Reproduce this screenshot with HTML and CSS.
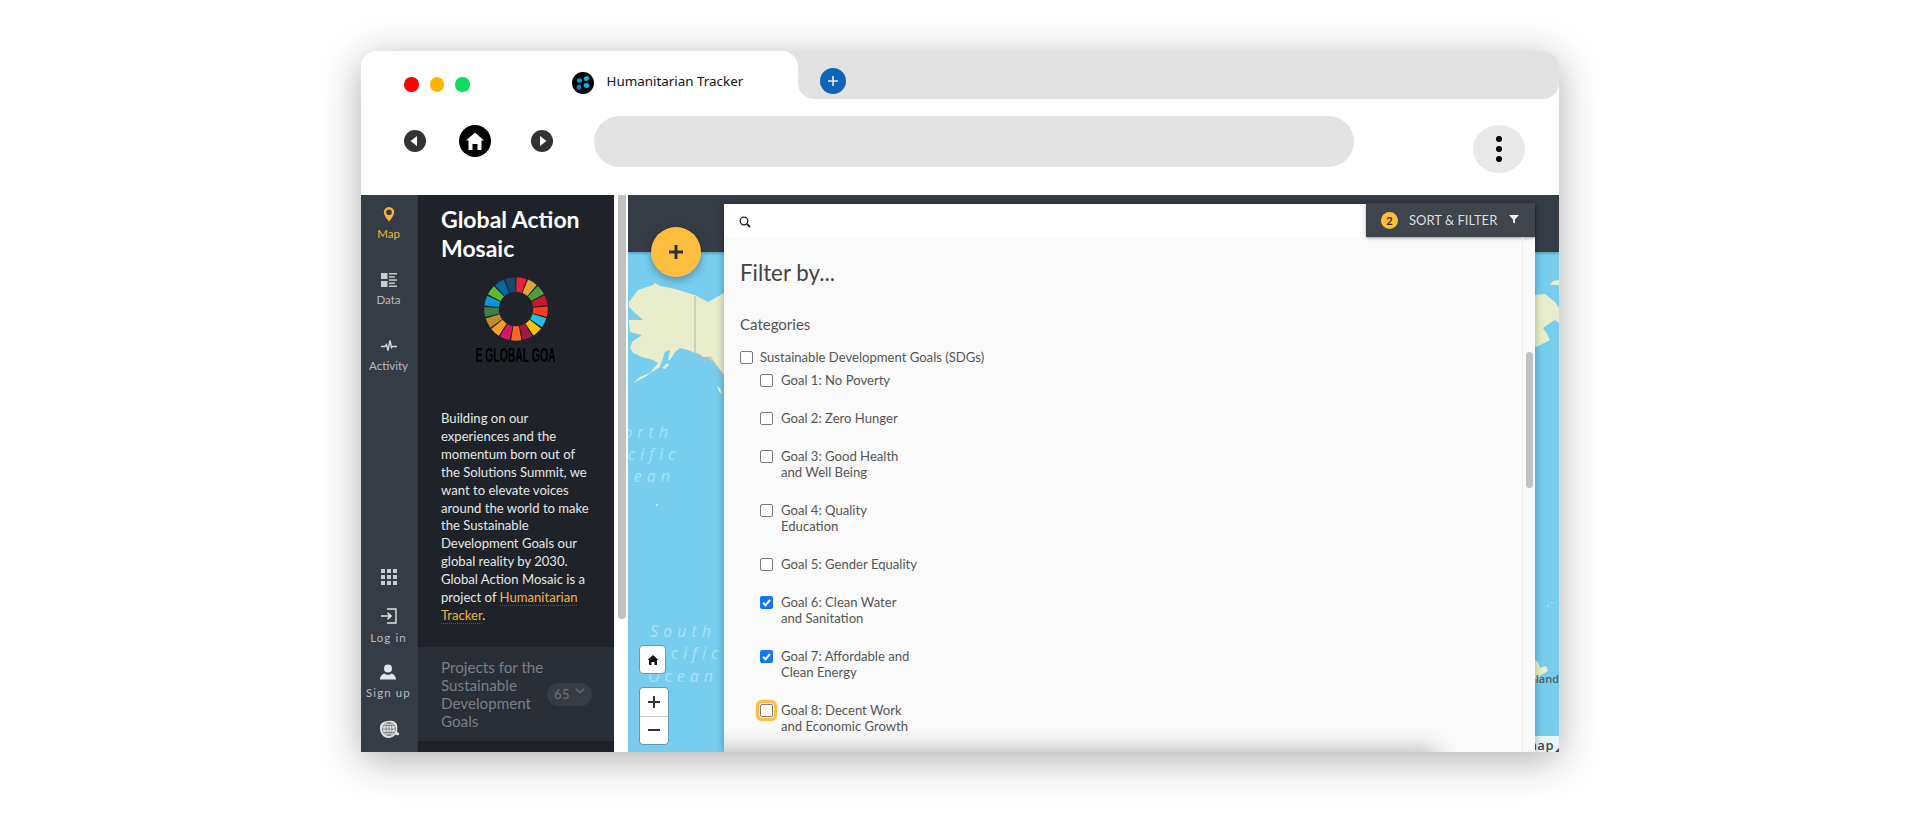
FILE: index.html
```html
<!DOCTYPE html>
<html lang="en">
<head>
  <meta charset="UTF-8">
  <meta name="viewport" content="width=device-width, initial-scale=1.0">
  <title>Humanitarian Tracker</title>
  <link rel="stylesheet" href="styles.css">
</head>
<body>

<div class="window">

  <!-- Browser chrome -->
  <div class="tabs">
    <div class="tab-wrap">
      <div class="tab">
        <div class="lights">
          <span class="light red"></span>
          <span class="light amber"></span>
          <span class="light green"></span>
        </div>
        <svg class="favicon" viewBox="0 0 22 22">
          <circle cx="11" cy="11" r="11" fill="#000"/>
          <ellipse cx="7.5" cy="8.5" rx="2.6" ry="2.3" fill="#0d9bd8"/>
          <ellipse cx="14.5" cy="6.5" rx="2.8" ry="2.2" fill="#12b0ea" transform="rotate(-30 14.5 6.5)"/>
          <ellipse cx="7" cy="15" rx="2.3" ry="2.6" fill="#0b7fc0"/>
          <ellipse cx="14.5" cy="13.5" rx="2.9" ry="2.4" fill="#12b0ea"/>
        </svg>
        <span class="tab-title">Humanitarian Tracker</span>
      </div>
    </div>
    <div class="tab-rest">
      <button class="new-tab">
        <svg viewBox="0 0 12 12" width="12" height="12"><path d="M6 1v10M1 6h10" stroke="#e8eef6" stroke-width="1.6"/></svg>
      </button>
    </div>
  </div>

  <div class="toolbar">
    <svg class="nav-btn back" viewBox="0 0 22 22">
      <circle cx="11" cy="11" r="11" fill="#333"/>
      <path d="M6.500 11l6.500-5v10z" fill="#fff"/>
    </svg>
    <svg class="home-btn" viewBox="0 0 32 32">
      <circle cx="16" cy="16" r="16" fill="#000"/>
      <path d="M16 7.500L25 15.500h-2.500V25h-4v-6h-5v6h-4V15.500H7z" fill="#fff"/>
    </svg>
    <svg class="nav-btn forward" viewBox="0 0 22 22">
      <circle cx="11" cy="11" r="11" fill="#333"/>
      <path d="M15.500 11l-6.500-5v10z" fill="#fff"/>
    </svg>
    <div class="address"></div>
    <div class="menu-btn"><span></span><span></span><span></span></div>
  </div>

  <div class="app">

    <!-- Icon rail -->
    <nav class="rail">
      <a class="rail-item active">
        <svg viewBox="0 0 16 16" width="16" height="16"><path d="M8 1a5.200 5.200 0 0 0-5.200 5.200C2.800 9.500 8 15.500 8 15.500s5.200-6 5.200-9.300A5.200 5.200 0 0 0 8 1zm0 8a2.800 2.800 0 1 1 0-5.600 2.800 2.800 0 0 1 0 5.600z" fill="#f1b43d"/></svg>
        <span>Map</span>
      </a>
      <a class="rail-item">
        <svg viewBox="0 0 16 16" width="16" height="16" fill="#c9cbce"><rect x="0" y="1" width="6.500" height="6"/><rect x="0" y="9" width="6.500" height="6"/><rect x="8" y="1" width="8" height="1.500"/><rect x="8" y="4.200" width="6" height="1.500"/><rect x="8" y="7.300" width="8" height="1.500"/><rect x="8" y="10.500" width="6" height="1.500"/><rect x="8" y="13.500" width="8" height="1.500"/></svg>
        <span>Data</span>
      </a>
      <a class="rail-item">
        <svg viewBox="0 0 16 16" width="16" height="16"><path d="M0 8.500h4l1.500-2 1.500 6 2-10 1.500 7 1-1h4.500" fill="none" stroke="#d5d7da" stroke-width="1.400"/></svg>
        <span>Activity</span>
      </a>

      <div class="rail-bottom">
        <svg class="rail-grid" viewBox="0 0 16 16" width="16" height="16" fill="#c9cbce"><rect x="0" y="0" width="4" height="4"/><rect x="6" y="0" width="4" height="4"/><rect x="12" y="0" width="4" height="4"/><rect x="0" y="6" width="4" height="4"/><rect x="6" y="6" width="4" height="4"/><rect x="12" y="6" width="4" height="4"/><rect x="0" y="12" width="4" height="4"/><rect x="6" y="12" width="4" height="4"/><rect x="12" y="12" width="4" height="4"/></svg>
        <a class="rail-item small login">
          <svg viewBox="0 0 16 16" width="16" height="16"><path d="M0 8h9M6.500 4.800L10 8l-3.500 3.200" fill="none" stroke="#e3e4e6" stroke-width="1.600"/><path d="M6 1h9v14H6" fill="none" stroke="#e3e4e6" stroke-width="1.400"/></svg>
          <span>Log in</span>
        </a>
        <a class="rail-item small signup">
          <svg viewBox="0 0 16 16" width="16" height="16" fill="#e3e4e6"><circle cx="8" cy="4.500" r="4"/><path d="M0 15.500c0-3.500 2.500-5.500 4.500-6 1 1 2 1.300 3.500 1.300s2.500-.3 3.500-1.300c2 .5 4.500 2.500 4.500 6z"/></svg>
          <span>Sign up</span>
        </a>
        <svg class="rail-globe" viewBox="0 0 22 20" width="22" height="20">
          <path d="M3 4c3-3.500 11-4 14-2 3 2 2.500 7 2 10 2 .5 3 2 1.500 3-1 .6-2.200.3-3-.5-2.500 3.500-8 4.500-11 2.500C2.500 14.500.500 8 3 4z" fill="#e0e1e3"/>
          <g fill="none" stroke="#6d7076" stroke-width=".7"><circle cx="11" cy="9" r="6.500"/><ellipse cx="11" cy="9" rx="3" ry="6.500"/><path d="M4.500 9h13M5.500 5.500h11M5.500 12.500h11M11 2.500v13"/></g>
        </svg>
      </div>
    </nav>

    <!-- Project panel -->
    <aside class="panel">
      <div class="panel-intro">
        <h1>Global Action Mosaic</h1>
        <svg class="wheel" viewBox="0 0 64 64">
          <g fill="none" stroke-width="14.500" stroke-dasharray="7.900 146">
            <circle cx="32" cy="32" r="24.500" stroke="#e5243b" transform="rotate(-89 32 32)"/>
            <circle cx="32" cy="32" r="24.500" stroke="#dda63a" transform="rotate(-67.800 32 32)"/>
            <circle cx="32" cy="32" r="24.500" stroke="#4c9f38" transform="rotate(-46.600 32 32)"/>
            <circle cx="32" cy="32" r="24.500" stroke="#c5192d" transform="rotate(-25.500 32 32)"/>
            <circle cx="32" cy="32" r="24.500" stroke="#ff3a21" transform="rotate(-4.300 32 32)"/>
            <circle cx="32" cy="32" r="24.500" stroke="#26bde2" transform="rotate(16.900 32 32)"/>
            <circle cx="32" cy="32" r="24.500" stroke="#fcc30b" transform="rotate(38.100 32 32)"/>
            <circle cx="32" cy="32" r="24.500" stroke="#a21942" transform="rotate(59.300 32 32)"/>
            <circle cx="32" cy="32" r="24.500" stroke="#fd6925" transform="rotate(80.400 32 32)"/>
            <circle cx="32" cy="32" r="24.500" stroke="#dd1367" transform="rotate(101.600 32 32)"/>
            <circle cx="32" cy="32" r="24.500" stroke="#fd9d24" transform="rotate(122.800 32 32)"/>
            <circle cx="32" cy="32" r="24.500" stroke="#bf8b2e" transform="rotate(144 32 32)"/>
            <circle cx="32" cy="32" r="24.500" stroke="#3f7e44" transform="rotate(165.200 32 32)"/>
            <circle cx="32" cy="32" r="24.500" stroke="#0a97d9" transform="rotate(186.300 32 32)"/>
            <circle cx="32" cy="32" r="24.500" stroke="#56c02b" transform="rotate(207.500 32 32)"/>
            <circle cx="32" cy="32" r="24.500" stroke="#00689d" transform="rotate(228.700 32 32)"/>
            <circle cx="32" cy="32" r="24.500" stroke="#19486a" transform="rotate(249.900 32 32)"/>
          </g>
        </svg>
        <div class="wheel-caption"><span>THE GLOBAL GOALS</span></div>
        <p>Building on our experiences and the momentum born out of the Solutions Summit, we want to elevate voices around the world to make the Sustainable Development Goals our global reality by 2030. Global Action Mosaic is a project of <a href="#">Humanitarian Tracker</a>.</p>
      </div>
      <div class="projects">
        <span class="projects-title">Projects for the Sustainable Development Goals</span>
        <span class="projects-count">65
          <svg viewBox="0 0 10 6" width="10" height="6"><path d="M1 1l4 3.500L9 1" fill="none" stroke="#5d626a" stroke-width="1.800"/></svg>
        </span>
      </div>
    </aside>

    <div class="panel-scroll"><div class="panel-thumb"></div></div>

    <!-- Map with filter overlay -->
    <main class="map">
      <svg class="map-canvas" viewBox="628 195 931 557">
        <path class="land" d="M629 302L638 290 653 285 655 283 660 286 675 289 695 295 708 302 717 297 724 293V375L720 370 713 362 708 357 703 357 697 354 688 350 680 348 675 352 670 360 668 360 670 350 665 352 660 367 655 370 645 377 633 383 640 377 650 373 658 363 653 360 642 357 633 353 630 348 632 342 642 335 630 332 629 320 643 320 635 313 629 307Z"/>
        <path class="land" d="M662 368l5-5 2 2-4 4zM717 386l3 2 2 6-3-2z"/>
        <path class="border" d="M695 296V353L700 355 705 362 710 357 718 368 724 377"/>
        <path class="land" d="M1535 295L1545 294 1555 302 1559 308V323L1555 320 1550 323 1543 328 1547 334 1550 340 1536 347 1535 347Z"/>
        <path class="land" d="M1550 285L1553 281 1559 280V285Z"/>
        <path class="land" d="M1535 660L1538 662 1540 668 1546 666 1548 671 1541 675 1537 679 1535 679Z"/>
        <circle class="land" cx="657" cy="505" r="1"/>
        <circle class="land" cx="1548" cy="606" r=".8"/>
        <circle class="land" cx="1552" cy="603" r=".8"/>
        <text class="ocean" x="640" y="438" text-anchor="middle">North</text>
        <text class="ocean" x="640" y="460" text-anchor="middle">Pacific</text>
        <text class="ocean" x="640" y="482" text-anchor="middle">Ocean</text>
        <text class="ocean" x="683" y="637" text-anchor="middle">South</text>
        <text class="ocean" x="683" y="659" text-anchor="middle">Pacific</text>
        <text class="ocean" x="683" y="682" text-anchor="middle">Ocean</text>
        <text class="place" x="1559" y="683" text-anchor="end">New Zealand</text>
      </svg>

      <div class="map-top"></div>
      <button class="fab">
        <svg viewBox="0 0 16 16" width="16" height="16"><path d="M8 1v14M1 8h14" stroke="#2d3138" stroke-width="3"/></svg>
      </button>

      <button class="map-home">
        <svg viewBox="0 0 12 12" width="12" height="12"><path d="M6 1l5.500 5H10v5H7.500V8h-3v3H2V6H.5z" fill="#111"/></svg>
      </button>
      <div class="map-zoom">
        <button><svg viewBox="0 0 12 12" width="12" height="12"><path d="M6 0v12M0 6h12" stroke="#333" stroke-width="2"/></svg></button>
        <button><svg viewBox="0 0 12 12" width="12" height="12"><path d="M0 6h12" stroke="#333" stroke-width="2"/></svg></button>
      </div>

      <div class="attribution"><span>map</span><i></i></div>

      <section class="filter">
        <div class="filter-head">
          <div class="search">
            <svg viewBox="0 0 12 12" width="12" height="12"><circle cx="5" cy="5" r="3.800" fill="none" stroke="#222" stroke-width="1.300"/><path d="M8 8l3 3" stroke="#222" stroke-width="1.800"/></svg>
          </div>
          <button class="sort">
            <span class="sort-count">2</span>
            <span>SORT &amp; FILTER</span>
            <svg viewBox="0 0 10 10" width="10" height="10"><path d="M0 1h10L6 5.500V9.500L4 8.500V5.500z" fill="#f0f0f0"/></svg>
          </button>
        </div>

        <div class="filter-body">
          <div class="filter-main">
            <h2>Filter by...</h2>
            <h3>Categories</h3>
            <label class="opt top"><span class="check"></span><span>Sustainable Development Goals (SDGs)</span></label>
            <div class="goals">
              <label class="opt"><span class="check"></span><span class="opt-text">Goal 1: No Poverty</span></label>
              <label class="opt"><span class="check"></span><span class="opt-text">Goal 2: Zero Hunger</span></label>
              <label class="opt"><span class="check"></span><span class="opt-text">Goal 3: Good Health and Well Being</span></label>
              <label class="opt"><span class="check"></span><span class="opt-text">Goal 4: Quality Education</span></label>
              <label class="opt"><span class="check"></span><span class="opt-text">Goal 5: Gender Equality</span></label>
              <label class="opt">
                <span class="check on"><svg viewBox="0 0 13 13" width="13" height="13"><path d="M3 6.800l2.500 2.500L10 4" fill="none" stroke="#fff" stroke-width="2"/></svg></span>
                <span class="opt-text">Goal 6: Clean Water and Sanitation</span>
              </label>
              <label class="opt">
                <span class="check on"><svg viewBox="0 0 13 13" width="13" height="13"><path d="M3 6.800l2.500 2.500L10 4" fill="none" stroke="#fff" stroke-width="2"/></svg></span>
                <span class="opt-text">Goal 7: Affordable and Clean Energy</span>
              </label>
              <label class="opt"><span class="check focus"></span><span class="opt-text">Goal 8: Decent Work and Economic Growth</span></label>
            </div>
          </div>
          <div class="filter-scroll"><div class="filter-thumb"></div></div>
          <div class="filter-fade"></div>
        </div>
      </section>
    </main>

  </div>
</div>

</body>
</html>
```

FILE: styles.css
```css
* { box-sizing: border-box; }
html, body { height: 100%; }
body {
  margin: 0;
  padding-top: 51px;
  background: #fff;
  font-family: 'Lato', sans-serif;
}
button {
  border: none;
  padding: 0;
  font-family: inherit;
  cursor: pointer;
}
.window {
  position: relative;
  width: 1198px;
  height: 701px;
  margin: 0 auto;
  background: #fff;
  border-radius: 16px 16px 0 0;
  box-shadow: 0 8px 40px rgba(0,0,0,0.32);
}

/* chrome */
.tabs {
  display: flex;
  height: 48px;
}
.tab-wrap {
  width: 437px;
  background: #e2e2e2;
  border-top-left-radius: 16px;
}
.tab {
  display: flex;
  align-items: center;
  height: 100%;
  padding-left: 43px;
  background: #fff;
  border-radius: 16px 16px 0 0;
}
.lights {
  display: flex;
  gap: 11px;
  margin-top: 19px;
}
.light {
  width: 14.5px;
  height: 14.5px;
  border-radius: 50%;
}
.light.red { background: #ff0000; }
.light.amber { background: #ffb400; }
.light.green { background: #0ddb5c; }
.favicon {
  width: 22px;
  height: 22px;
  margin: 15px 0 0 102px;
}
.tab-title {
  margin: 11px 0 0 13px;
  font-family: 'Noto Sans', sans-serif;
  font-size: 13.4px;
  color: #111;
}
.tab-rest {
  flex: 1;
  display: flex;
  align-items: center;
  padding-left: 22px;
  background: #e2e2e2;
  border-radius: 0 16px 16px 16px;
}
.new-tab {
  display: flex;
  align-items: center;
  justify-content: center;
  width: 26px;
  height: 26px;
  margin-top: 11px;
  border-radius: 50%;
  background: #0f63b8;
}
.toolbar {
  display: flex;
  align-items: center;
  height: 96px;
  padding: 0 34px 12px 43px;
}
.nav-btn {
  width: 22px;
  height: 22px;
}
.home-btn {
  width: 32px;
  height: 32px;
  margin-left: 33px;
}
.forward { margin-left: 40px; }
.address {
  width: 760px;
  height: 51px;
  margin-left: 41px;
  background: #e3e3e3;
  border-radius: 26px;
}
.menu-btn {
  display: flex;
  flex-direction: column;
  align-items: center;
  justify-content: center;
  gap: 3.5px;
  width: 52px;
  height: 48px;
  margin: 16px 0 0 auto;
  background: #e9e9e9;
  border-radius: 50%;
}
.menu-btn span {
  width: 6.5px;
  height: 6.5px;
  background: #000;
  border-radius: 50%;
}

/* app */
.app {
  display: flex;
  height: 557px;
  overflow: hidden;
}
.rail {
  display: flex;
  flex-direction: column;
  width: 57px;
  padding-right: 2px;
  background: #363c45;
  color: #b9bbbf;
}
.rail-item {
  display: flex;
  flex-direction: column;
  align-items: center;
  gap: 5px;
  height: 66px;
  padding-top: 11px;
  font-size: 11.5px;
  line-height: 14px;
}
.rail-item.active { color: #f1b43d; }
.rail-bottom {
  display: flex;
  flex-direction: column;
  align-items: center;
  margin-top: auto;
  padding-bottom: 12px;
}
.rail-item.small {
  height: auto;
  padding: 0;
  letter-spacing: 1.1px;
}
.login { margin-top: 23px; gap: 7px; }
.signup { margin-top: 19px; gap: 6px; }
.rail-globe { margin-top: 20px; }

.panel {
  display: flex;
  flex-direction: column;
  width: 196px;
  background: #1f2329;
  color: #e6e6e6;
}
.panel-intro { padding: 10px 23px 22px; }
.panel h1 {
  margin: 0;
  font-size: 23px;
  line-height: 29px;
  font-weight: 700;
  color: #fff;
}
.wheel {
  display: block;
  width: 64px;
  height: 64px;
  margin: 14px 0 0 43px;
}
.wheel-caption {
  display: flex;
  justify-content: center;
  width: 79px;
  height: 15px;
  margin: 7px 0 0 35px;
  overflow: hidden;
}
.wheel-caption span {
  flex: none;
  font-family: 'Liberation Sans', sans-serif;
  font-weight: 700;
  font-size: 20px;
  line-height: 15px;
  color: #000;
  transform: scaleX(0.52);
}
.panel p {
  margin: 47px 0 0;
  font-size: 13.1px;
  line-height: 17.9px;
}
.panel p a {
  color: #f1b43d;
  text-decoration: none;
  border-bottom: 1px dotted #55554f;
}
.projects {
  display: flex;
  align-items: center;
  height: 94px;
  padding: 0 22px 0 23px;
  background: #2a2e36;
  color: #7c7f85;
}
.projects-title {
  width: 106px;
  flex: none;
  font-size: 15.2px;
  line-height: 18px;
}
.projects-count {
  display: flex;
  flex: none;
  align-items: center;
  justify-content: center;
  gap: 5px;
  width: 45px;
  height: 23px;
  margin: 2px 0 0 auto;
  padding-bottom: 1px;
  background: #363b44;
  border-radius: 12px;
  font-size: 13px;
  letter-spacing: 0.5px;
  color: #70747b;
}
.projects-count svg { margin-top: -6px; }
.panel-scroll {
  width: 14px;
  padding-left: 4px;
  background: #fff;
}
.panel-thumb {
  width: 8px;
  height: 424px;
  background: #c1c1c1;
  border-radius: 0 0 4px 4px;
}

/* map */
.map {
  position: relative;
  flex: 1;
  background: #76cdee;
  overflow: hidden;
}
.map-canvas {
  position: absolute;
  top: 0;
  left: 0;
  width: 931px;
  height: 557px;
}
.land { fill: #e8eecb; }
.border {
  fill: none;
  stroke: #bcbcb0;
  stroke-width: 1.2;
}
.ocean {
  font-family: 'Open Sans', sans-serif;
  font-style: italic;
  font-size: 16px;
  letter-spacing: 5px;
  fill: rgba(255,255,255,0.4);
}
.place {
  font-family: 'Open Sans', sans-serif;
  font-size: 11px;
  font-weight: 600;
  fill: #565f63;
}
.map-top {
  position: relative;
  height: 57px;
  background: #363c45;
  box-shadow: 0 1px 3px rgba(0,0,0,0.3);
}
.fab {
  position: absolute;
  top: 32px;
  left: 23px;
  display: flex;
  align-items: center;
  justify-content: center;
  width: 50px;
  height: 50px;
  background: #fdbe3f;
  border-radius: 50%;
  box-shadow: 0 3px 8px rgba(0,0,0,0.3);
}
.map-home,
.map-zoom {
  position: absolute;
  left: 11px;
  background: #fff;
  border: 1px solid #5d9db5;
  border-radius: 4px;
}
.map-home {
  top: 450px;
  display: flex;
  align-items: center;
  justify-content: center;
  width: 27px;
  height: 29px;
}
.map-zoom {
  top: 492px;
  display: flex;
  flex-direction: column;
  width: 30px;
  height: 58px;
}
.map-zoom button {
  display: flex;
  align-items: center;
  justify-content: center;
  flex: 1;
  background: none;
}
.map-zoom button + button { border-top: 1px solid #ccc; }
.attribution {
  position: absolute;
  right: 0;
  bottom: 0;
  display: flex;
  justify-content: flex-end;
  width: 24px;
  height: 16px;
  padding-right: 5px;
  background: #e9f4f8;
  overflow: hidden;
}
.attribution span {
  flex: none;
  font-family: 'Open Sans', sans-serif;
  font-weight: 600;
  font-size: 13px;
  line-height: 18px;
  letter-spacing: 0.5px;
  color: #444;
}
.attribution i {
  position: absolute;
  right: 0;
  bottom: 0;
  border-style: solid;
  border-width: 0 0 4px 4px;
  border-color: transparent transparent #5a2da0 transparent;
}

/* filter overlay */
.filter {
  position: absolute;
  top: 9px;
  bottom: 0;
  left: 96px;
  display: flex;
  flex-direction: column;
  width: 811px;
  background: #fafafa;
  box-shadow: 0 0 8px rgba(0,0,0,0.3);
}
.filter-head {
  display: flex;
  height: 33px;
  background: #fff;
}
.search {
  flex: 1;
  padding: 12px 0 0 15px;
}
.search svg { display: block; }
.sort {
  position: relative;
  display: flex;
  align-items: center;
  width: 169px;
  height: 34px;
  margin-top: -1px;
  padding-left: 15px;
  background: #40444c;
  box-shadow: 0 1px 3px rgba(0,0,0,0.4);
  font-size: 13px;
  color: #ddd;
}
.sort-count {
  width: 17px;
  height: 17px;
  margin-right: 11px;
  background: #fdbe3f;
  border-radius: 50%;
  font-size: 11px;
  line-height: 17px;
  font-weight: 700;
  color: #333;
}
.sort svg { margin: -2px 0 0 12px; }
.filter-body {
  position: relative;
  flex: 1;
  display: flex;
  overflow: hidden;
}
.filter-main {
  flex: 1;
  padding: 21px 0 0 16px;
  color: #555;
}
.filter-main h2 {
  margin: 0;
  font-size: 22.3px;
  line-height: 30px;
  font-weight: 400;
  color: #444;
}
.filter-main h3 {
  margin: 26px 0 0;
  font-size: 15px;
  line-height: 20px;
  font-weight: 400;
}
.opt {
  display: flex;
  gap: 8px;
  font-size: 13.1px;
  line-height: 16px;
  margin-bottom: 22px;
}
.opt.top {
  margin: 15px 0 7px;
  gap: 7px;
}
.goals { padding-left: 20px; }
.opt-text { max-width: 138px; }
.check {
  flex: none;
  width: 13px;
  height: 13px;
  margin-top: 2px;
  background: #fff;
  border: 1px solid #7a7a7a;
  border-radius: 2px;
}
.check.on {
  position: relative;
  background: #1277f5;
  border: none;
}
.check svg { display: block; }
.check.focus {
  outline: 3px solid #fdbe3f;
  outline-offset: 1px;
  box-shadow: 0 0 0 5px rgba(253,190,63,0.2);
}
.filter-scroll {
  width: 13px;
  padding: 115px 0 0 3px;
  border-left: 1px solid #ededed;
}
.filter-thumb {
  width: 7px;
  height: 136px;
  background: #c1c1c1;
  border-radius: 4px;
}
.filter-fade {
  position: absolute;
  left: -40px;
  right: 100px;
  bottom: -14px;
  height: 14px;
  box-shadow: 0 0 22px 2px rgba(0,0,0,0.3);
}
```
